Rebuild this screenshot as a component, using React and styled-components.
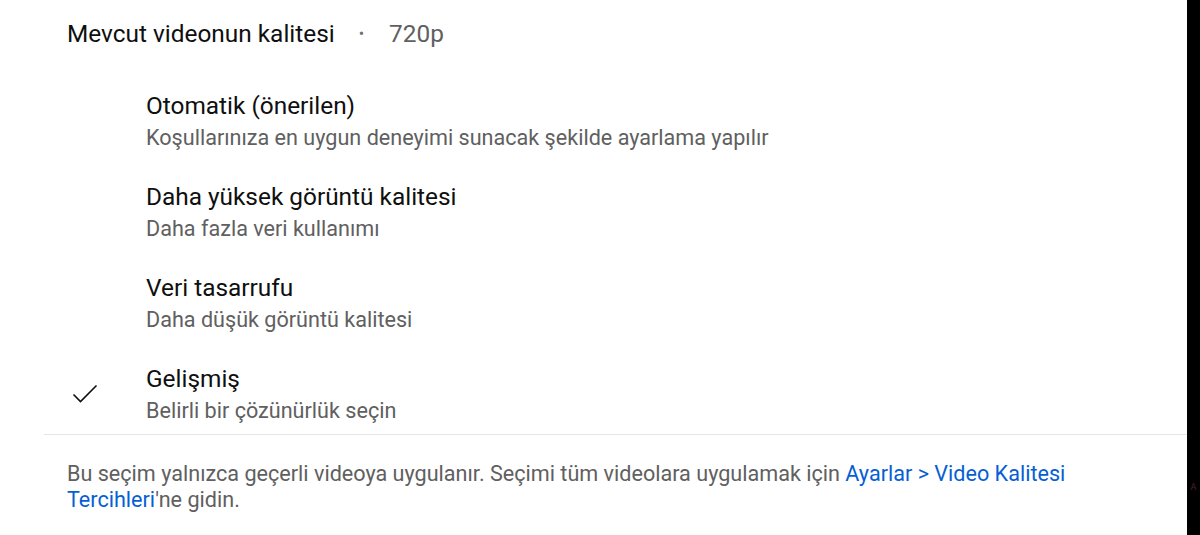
import React from 'react'
import styled, { createGlobalStyle } from 'styled-components'

const Global = createGlobalStyle`
  html, body {
    margin: 0;
    padding: 0;
    background: #000;
  }
  body {
    font-family: Roboto, "Noto Sans", Arial, sans-serif;
  }
`

const Screen = styled.div`
  display: flex;
  width: 1200px;
  height: 535px;
  background: #000;
  overflow: hidden;
`

const Sheet = styled.div`
  width: 1187px;
  height: 535px;
  background: #fff;
  display: flex;
  flex-direction: column;
`

const Edge = styled.div`
  flex: 1;
  display: flex;
  flex-direction: column;
  align-items: center;
  padding-top: 482px;
  font-family: Roboto, sans-serif;
  font-size: 9px;
  color: #4a2226;
`

const Header = styled.div`
  display: flex;
  align-items: center;
  height: 66px;
  padding-left: 67px;
  font-size: 24.4px;
  color: #0f0f0f;

  .dot {
    margin: 0 25px 0 24px;
    color: #707070;
    font-size: 16px;
  }

  .value {
    color: #606060;
  }
`

const OptionList = styled.div`
  display: flex;
  flex-direction: column;
  padding-top: 10px;
`

const Option = styled.div`
  display: flex;
  align-items: center;
  padding: 15px 0 16px;
  cursor: pointer;

  &:last-child {
    padding-bottom: 10px;
  }

  .check {
    width: 146px;
    display: flex;
    padding-left: 72px;
    box-sizing: border-box;
  }

  .name {
    font-size: 24.4px;
    color: #0f0f0f;
    line-height: 30px;
  }

  .desc {
    font-size: 21.6px;
    color: #606060;
    line-height: 26px;
    margin-top: 4px;
  }
`

const Divider = styled.hr`
  border: 0;
  border-top: 1px solid #e5e5e5;
  margin: 0 0 0 44px;
`

const Footer = styled.p`
  margin: 0;
  padding: 26px 77px 0 67px;
  font-size: 21.6px;
  line-height: 26px;
  color: #606060;

  a {
    color: #065fd4;
    text-decoration: none;
  }
`

const Check = () => (
  <svg width="26" height="20" viewBox="0 0 26 20">
    <path d="M1.5 10.5 L8.5 17.5 L24.5 1.5" fill="none" stroke="#0f0f0f" strokeWidth="1.6" />
  </svg>
)

const options = [
  { name: 'Otomatik (önerilen)', desc: 'Koşullarınıza en uygun deneyimi sunacak şekilde ayarlama yapılır' },
  { name: 'Daha yüksek görüntü kalitesi', desc: 'Daha fazla veri kullanımı' },
  { name: 'Veri tasarrufu', desc: 'Daha düşük görüntü kalitesi' },
  { name: 'Gelişmiş', desc: 'Belirli bir çözünürlük seçin', selected: true },
]

export default function App() {
  return (
    <Screen>
      <Global />
      <Sheet>
        <Header>
          <span>Mevcut videonun kalitesi</span>
          <span className="dot">•</span>
          <span className="value">720p</span>
        </Header>
        <OptionList>
          {options.map(o => (
            <Option key={o.name}>
              <div className="check">{o.selected ? <Check /> : null}</div>
              <div>
                <div className="name">{o.name}</div>
                <div className="desc">{o.desc}</div>
              </div>
            </Option>
          ))}
        </OptionList>
        <Divider />
        <Footer>
          Bu seçim yalnızca geçerli videoya uygulanır. Seçimi tüm videolara uygulamak için <a href="#">Ayarlar &gt; Video Kalitesi Tercihleri</a>'ne gidin.
        </Footer>
      </Sheet>
      <Edge>A</Edge>
    </Screen>
  )
}
